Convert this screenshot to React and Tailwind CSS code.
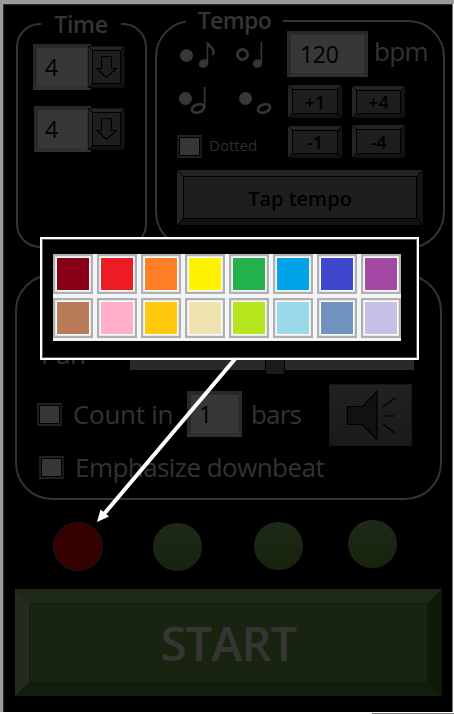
import React from "react";

const colors = [
  "bg-[#880015]", "bg-[#ed1c24]", "bg-[#ff7f27]", "bg-[#fff200]",
  "bg-[#22b14c]", "bg-[#00a2e8]", "bg-[#3f48cc]", "bg-[#a349a4]",
  "bg-[#b97a57]", "bg-[#ffaec9]", "bg-[#ffc90e]", "bg-[#efe4b0]",
  "bg-[#b5e61d]", "bg-[#99d9ea]", "bg-[#7092be]", "bg-[#c8bfe7]",
];

function Field({ className, children }) {
  return (
    <div className={`flex h-[46px] shrink-0 items-center border-4 border-[#292929] border-r-[#2c2c2c] border-b-[#303030] bg-[#373737] pl-2 text-[23px] leading-none text-black ${className}`}>
      {children}
    </div>
  );
}

// Dark seams along the mitred corners of a raised button.
function Mitres({ depth, inset }) {
  return (
    <svg className={`pointer-events-none absolute ${inset}`} width="100%" height="100%" stroke="#000" strokeWidth="1" overflow="visible">
      <line x1="0" y1="0" x2={depth} y2={depth} />
      <svg x="100%" y="0" overflow="visible"><line x1="0" y1="0" x2={-depth} y2={depth} /></svg>
      <svg x="0" y="100%" overflow="visible"><line x1="0" y1="0" x2={depth} y2={-depth} /></svg>
      <svg x="100%" y="100%" overflow="visible"><line x1="0" y1="0" x2={-depth} y2={-depth} /></svg>
    </svg>
  );
}

function Bevel({ large, className, children }) {
  return (
    <button className={`relative flex shrink-0 items-center justify-center border-t-[#232323] border-r-[#131313] border-b-[#121212] border-l-[#242424] bg-[#1e1e1e] leading-none font-semibold text-black shadow-[inset_0_0_0_1px_#000] ${large ? "border-[6px]" : "border-4"} ${className}`}>
      {children}
      {large ? (
        <span className="pointer-events-none absolute -inset-[6px]"><Mitres depth={6} inset="inset-0" /></span>
      ) : (
        <span className="pointer-events-none absolute -inset-[4px]"><Mitres depth={4} inset="inset-0" /></span>
      )}
    </button>
  );
}

function Dropdown({ value, className, fieldClass }) {
  return (
    <div className={`flex items-start ${className}`}>
      <Field className={fieldClass}>{value}</Field>
      <Bevel className="-ml-[3px] mt-[2px] h-[42px] w-[37px] outline outline-1 -outline-offset-1 outline-black/40">
        <svg width="21" height="24" viewBox="0 0 21 24" fill="none" stroke="#000" strokeWidth="1.2">
          <path d="M5.500 1.500h10v12h5L10.500 22.500 1 13.500h4.500z" />
        </svg>
      </Bevel>
    </div>
  );
}

function Check({ className }) {
  return (
    <span className={`block h-[23px] w-[25px] shrink-0 border-2 border-t-[#222] border-r-[#191919] border-b-[#202020] border-l-[#1c1c1c] bg-[#363636] shadow-[inset_0_0_0_1px_#000] ${className}`} />
  );
}

function Radio({ selected, className }) {
  return (
    <span className={`block size-[13px] shrink-0 rounded-full ${selected ? "border-[3px] border-[#353535] bg-black" : "bg-[#373737]"} ${className}`} />
  );
}

function Note({ kind, className }) {
  return (
    <svg width="24" height="28" viewBox="0 0 24 28" className={`shrink-0 ${className}`} fill="none" stroke="#353535">
      {(kind === "eighth" || kind === "quarter") && (
        <>
          <ellipse cx="5.500" cy="22.500" rx="4.800" ry="4.200" fill="#353535" stroke="none" transform="rotate(-25 5.500 22.500)" />
          <path d="M9.400 22V1" strokeWidth="1.600" />
          {kind === "eighth" && <path d="M9.600 2c.8 3.500 5.300 4.500 5.900 7.500 .2 2-.4 3.500-1 4.500" strokeWidth="2.400" />}
        </>
      )}
      {(kind === "half" || kind === "whole") && (
        <>
          <ellipse cx="8" cy="22.500" rx="6.300" ry="4" strokeWidth="2.500" transform="rotate(-20 8 22.500)" />
          {kind === "half" && <path d="M14.700 21V1" strokeWidth="1.800" />}
        </>
      )}
    </svg>
  );
}

function TimeGroup() {
  return (
    <section className="ml-[12px] mt-[18px] h-[225px] w-[131px] rounded-[24px] border-2 border-[#333]">
      <h2 className="-mt-[16px] ml-[23px] h-[31px] w-[80px] bg-black text-center text-[23px] leading-[30px] font-semibold tracking-[-0.300px] text-[#353535]">Time</h2>
      <Dropdown value="4" className="ml-[15px] mt-[4px]" fieldClass="w-[58px]" />
      <Dropdown value="4" className="ml-[16px] mt-[16px]" fieldClass="w-[57px] pl-[7px]" />
    </section>
  );
}

function TempoGroup() {
  return (
    <section className="ml-[8px] mt-[15px] h-[229px] w-[290px] rounded-[37px] border-2 border-[#333]">
      <h2 className="-mt-[16px] ml-[29px] h-[25px] w-[97px] bg-black text-center text-[23px] leading-[29px] font-semibold tracking-[-0.600px] text-[#353535]">Tempo</h2>
      <div className="flex">
        <div className="w-[130px]">
          <div className="flex pt-[10px]">
            <Radio className="ml-[23px] mt-[8px]" />
            <Note kind="eighth" className="ml-[5px]" />
            <Radio selected className="ml-[14px] mt-[7px]" />
            <Note kind="quarter" className="ml-[3px]" />
          </div>
          <div className="mt-[17px] flex">
            <Radio className="ml-[22px] mt-[6px]" />
            <Note kind="half" className="ml-[-2px]" />
            <Radio className="ml-[25px] mt-[6px]" />
            <Note kind="whole" className="ml-[4px]" />
          </div>
          <div className="mt-[21px] flex">
            <Check className="ml-[20px]" />
            <span className="ml-[7px] mt-[-1px] text-[15px] leading-[22px] text-[#2e2e2e]">Dotted</span>
          </div>
        </div>
        <div className="w-[156px]">
          <div className="flex">
            <Field className="w-[81px] pl-[9px] tracking-[-0.300px]">120</Field>
            <span className="ml-[6px] mt-[2px] text-[26px] leading-[36px] tracking-[-0.600px] text-[#333]">bpm</span>
          </div>
          <div className="mt-[8px] flex items-start gap-[10px] text-[18px]">
            <Bevel className="ml-[1px] h-[33px] w-[54px]">+1</Bevel>
            <Bevel className="mt-[1px] h-[32px] w-[53px]">+4</Bevel>
          </div>
          <div className="mt-[7px] flex items-start gap-[10px] text-[18px]">
            <Bevel className="ml-[1px] mt-[1px] h-[32px] w-[54px]">-1</Bevel>
            <Bevel className="h-[33px] w-[53px]">-4</Bevel>
          </div>
        </div>
      </div>
      <Bevel large className="ml-[20px] mt-[12px] h-[55px] w-[246px] pt-[2px] text-[20px] tracking-[0px]">Tap tempo</Bevel>
    </section>
  );
}

function OptionsGroup() {
  return (
    <section className="ml-[11px] mt-[25px] h-[226px] w-[427px] rounded-[37px] border-2 border-[#333] pt-[68px] text-[26px] text-[#333]">
      <div className="flex h-[40px] items-start">
        <span className="-mt-[8px] ml-[24px] w-[89px] leading-[36px] tracking-[-0.600px]">Pan</span>
        <div className="mt-[15px] flex h-[11px] w-[284px] bg-[#292929]">
          <span className="ml-[135px] h-[15px] w-[20px] rounded-b-[3px] border-x border-black bg-[#1b1b1b]" />
        </div>
      </div>
      <div className="flex h-[64px] items-start">
        <Check className="ml-[20px] mt-[19px]" />
        <span className="ml-[11px] mt-[12px] w-[114px] leading-[36px] whitespace-nowrap tracking-[-0.300px]">Count in</span>
        <Field className="mt-[7px] w-[55px] pl-[8px]">1</Field>
        <span className="ml-[9px] mt-[12px] w-[78px] leading-[36px] tracking-[-0.800px]">bars</span>
        <button className="flex h-[62px] w-[83px] justify-center border border-[#171717] bg-linear-to-b from-[#212121] to-[#1a1a1a] pt-[5px]">
          <svg width="50" height="50" viewBox="0 0 50 50" fill="#111" stroke="#000" strokeWidth="1.200">
            <path d="M1.500 16.500h15L31 1.500v48L16.500 34.500h-15z" />
            <path d="M37 17L49 8M37 26h12M37 34l12 9" fill="none" />
          </svg>
        </button>
      </div>
      <div className="flex items-start">
        <Check className="ml-[22px] mt-[8px] w-[24px]" />
        <span className="ml-[11px] mt-[1px] leading-[36px] whitespace-nowrap tracking-[-0.560px]">Emphasize downbeat</span>
      </div>
    </section>
  );
}

function ColorPopup() {
  return (
    <div className="absolute top-[237px] left-[40px] h-[123px] w-[379px] border-2 border-white bg-black pt-[15px] pl-[11px] shadow-[inset_0_0_0_1px_#555]">
      <div className="grid h-[87px] w-[348px] grid-cols-8 content-start gap-[4px] bg-[#f3f4f8]">
        {colors.map((color) => (
          <button key={color} className="size-[40px] border-2 border-[#b0b0b0] bg-[#e6e6e6] p-px">
            <span className="block size-full border border-white bg-white">
              <span className={`block size-full ${color}`} />
            </span>
          </button>
        ))}
      </div>
    </div>
  );
}

export default function App() {
  return (
    <main className="relative flex h-[714px] w-[454px] flex-col overflow-hidden bg-white font-['Open_Sans',sans-serif]">
      <div className="h-[4px] shrink-0 bg-[#9b9b9b]" />
      <div className="h-[708px] w-[453px] shrink-0 border-r border-l-[3px] border-r-[#777] border-l-[#9b9b9b]">
        <div className="h-full border-t border-l border-[#303030] bg-black">
          <div className="flex items-start">
            <TimeGroup />
            <TempoGroup />
          </div>
          <OptionsGroup />
          <div className="flex h-[89px] items-start">
            <span className="ml-[49px] mt-[22px] block h-[49px] w-[50px] rounded-full border border-[#101820] bg-[#370000]" />
            <span className="ml-[50px] mt-[23px] block h-[48px] w-[49px] rounded-full bg-linear-to-b from-[#1e2917] to-[#17230c]" />
            <span className="ml-[52px] mt-[22px] block h-[48px] w-[49px] rounded-full bg-linear-to-b from-[#1e2917] to-[#17230c]" />
            <span className="ml-[45px] mt-[20px] block h-[48px] w-[49px] rounded-full bg-linear-to-b from-[#1e2917] to-[#17230c]" />
          </div>
          <button className="ml-[11px] flex h-[107px] w-[427px] items-center justify-center border-[14px] border-t-[#1e2817] border-r-[#0f190a] border-b-[#131d0c] border-l-[#222b1e] bg-[#192410] pt-[1px] text-[47px] leading-none font-semibold tracking-[-0.900px] text-[#353535] shadow-[inset_0_0_0_1px_#141e0c]">
            START
          </button>
        </div>
      </div>
      <div className="mt-px ml-[372px] h-px shrink-0 bg-[#777]" />
      <ColorPopup />
      <svg className="absolute top-0 left-0" width="454" height="714" viewBox="0 0 454 714" fill="#fff">
        <path d="M235 359L104 514" stroke="#fff" strokeWidth="4" />
        <path d="M97 522L100.500 509.500 109 516.500z" />
      </svg>
    </main>
  );
}
